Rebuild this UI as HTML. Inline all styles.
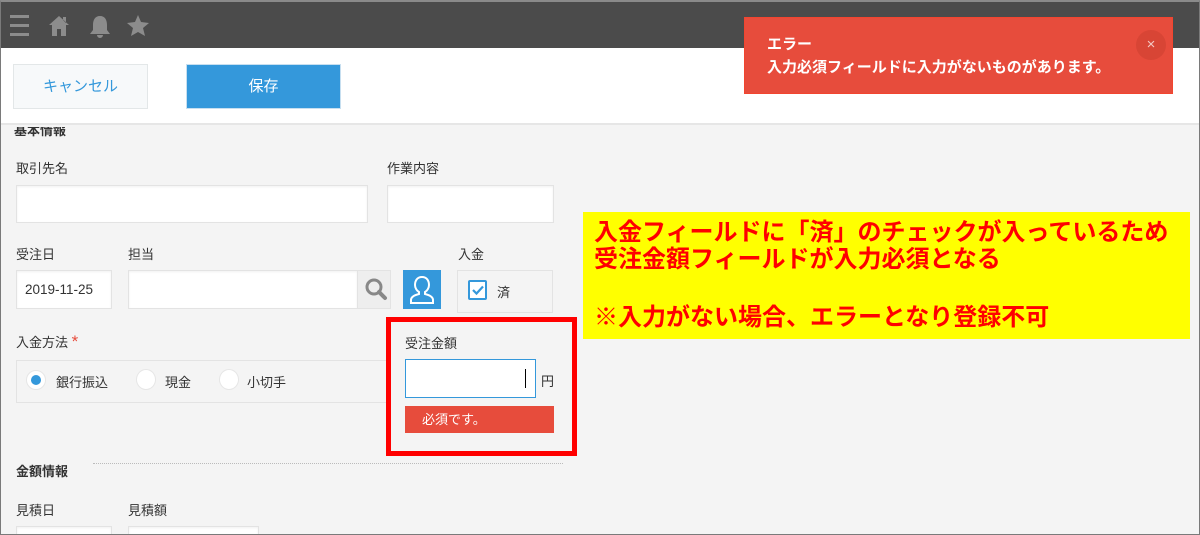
<!DOCTYPE html>
<html style="width:1200px;height:535px;overflow:hidden"><head><meta charset="utf-8"><style>
*{margin:0;padding:0;box-sizing:border-box}
body{width:1200px;height:535px;overflow:hidden;background:#f4f4f4;font-family:"Liberation Sans","Noto Sans CJK JP",sans-serif;font-size:13px;color:#333;position:relative}
.a{position:absolute}
.inp{position:absolute;background:#fff;border:1px solid #e3e3e3;box-shadow:inset 0 1px 2px rgba(0,0,0,.06)}
.lbl{position:absolute;font-size:13px;color:#333}
.y{position:absolute;left:594px;color:#ff0000;font-weight:bold;font-size:24px;line-height:26px;white-space:nowrap;letter-spacing:0px}
</style></head><body>
<div class="a" style="left:0;top:0;width:1200px;height:48px;background:#4b4b4b"></div>
<svg class="a" style="left:8px;top:12px" width="150" height="28" viewBox="0 0 150 28">
<g fill="#8c8c8c"><rect x="2" y="3" width="19" height="3"/><rect x="2" y="12" width="19" height="3"/><rect x="2" y="21" width="19" height="3"/>
<path d="M51 4 L41 13 L44 13 L44 24 L49 24 L49 17 L53 17 L53 24 L58 24 L58 13 L61 13 Z M55 5 h3 v6 l-3-3z"/>
<path d="M92 4 c-5 0 -7 4 -7 9 v5 l-3 4 h20 l-3-4 v-5 c0-5-2-9-7-9z M89 23 a3 3 0 0 0 6 0z"/>
<path d="M130 3 l3 7 8 1 -6 5 2 8 -7-4 -7 4 2-8 -6-5 8-1z"/>
</g></svg>
<div class="a" style="left:0;top:48px;width:1200px;height:77px;background:#fff;border-bottom:2px solid #e6e6e6"></div>
<div class="a" style="left:13px;top:64px;width:135px;height:45px;background:#f7f9fa;border:1px solid #e3e7e8;color:#3498db;font-size:15px;text-align:center;line-height:43px">キャンセル</div>
<div class="a" style="left:186px;top:64px;width:155px;height:45px;background:#3498db;border:1px solid #c7dff0;color:#fff;font-size:15px;text-align:center;line-height:43px">保存</div>
<div class="a" style="left:14px;top:120px;font-size:13px;font-weight:bold;clip-path:inset(7px 0 0 0)">基本情報</div>

<div class="lbl" style="left:16px;top:158px">取引先名</div>
<div class="inp" style="left:16px;top:185px;width:352px;height:38px"></div>
<div class="lbl" style="left:387px;top:158px">作業内容</div>
<div class="inp" style="left:387px;top:185px;width:167px;height:38px"></div>

<div class="lbl" style="left:16px;top:244px">受注日</div>
<div class="inp" style="left:16px;top:270px;width:96px;height:39px;font-size:13.5px;line-height:37px;padding-left:8px;color:#333">2019-11-25</div>
<div class="lbl" style="left:128px;top:244px">担当</div>
<div class="inp" style="left:128px;top:270px;width:230px;height:39px"></div>
<div class="a" style="left:357px;top:270px;width:34px;height:39px;background:#eee;border:1px solid #e3e3e3"></div>
<svg class="a" style="left:364px;top:277px" width="24" height="24"><circle cx="10" cy="10" r="7" fill="none" stroke="#888" stroke-width="3"/><path d="M15 15 L21 21" stroke="#888" stroke-width="4" stroke-linecap="round"/></svg>
<div class="a" style="left:403px;top:270px;width:38px;height:39px;background:#3498db"></div>
<svg class="a" style="left:407px;top:273px" width="30" height="33"><path d="M15 4 c-5 0-7 4-7 8 c0 3 2 6 4 7 l0 2 c-4 1-8 3-8 6 v3 h22 v-3 c0-3-4-5-8-6 v-2 c2-1 4-4 4-7 c0-4-2-8-7-8z" fill="none" stroke="#fff" stroke-width="2"/></svg>
<div class="lbl" style="left:458px;top:244px">入金</div>
<div class="a" style="left:457px;top:270px;width:96px;height:43px;border:1px solid #e3e3e3"></div>
<div class="a" style="left:468px;top:280px;width:19px;height:20px;border:2px solid #3498db;background:#fff;border-radius:2px"></div>
<svg class="a" style="left:471px;top:284px" width="14" height="12"><path d="M2 6 L5.5 9.5 L12 2.5" fill="none" stroke="#3498db" stroke-width="2.2"/></svg>
<div class="lbl" style="left:497px;top:282px">済</div>

<div class="lbl" style="left:16px;top:332px">入金方法 <span style="color:#e74c3c;font-size:17px">*</span></div>
<div class="a" style="left:16px;top:360px;width:380px;height:43px;border:1px solid #e3e3e3"></div>
<div class="a" style="left:26px;top:370px;width:20px;height:20px;border-radius:50%;background:#fff;border:1px solid #e6e6e6"></div>
<div class="a" style="left:31px;top:375px;width:10px;height:10px;border-radius:50%;background:#3498db"></div>
<div class="lbl" style="left:56px;top:372px">銀行振込</div>
<div class="a" style="left:136px;top:369px;width:20px;height:21px;border-radius:50%;background:#fff;border:1px solid #e6e6e6"></div>
<div class="lbl" style="left:165px;top:372px">現金</div>
<div class="a" style="left:219px;top:369px;width:20px;height:21px;border-radius:50%;background:#fff;border:1px solid #e6e6e6"></div>
<div class="lbl" style="left:247px;top:372px">小切手</div>

<div class="a" style="left:386px;top:317px;width:191px;height:139px;background:#f4f4f4;border:5px solid #ff0000"></div>
<div class="lbl" style="left:405px;top:333px">受注金額</div>
<div class="a" style="left:405px;top:359px;width:131px;height:39px;background:#fff;border:1px solid #3498db"></div>
<div class="a" style="left:525px;top:369px;width:1px;height:19px;background:#000"></div>
<div class="lbl" style="left:541px;top:371px">円</div>
<div class="a" style="left:405px;top:406px;width:149px;height:27px;background:#e74c3c;color:#fff;font-size:13px;line-height:27px;padding-left:17px">必須です。</div>

<div class="a" style="left:93px;top:463px;width:470px;border-top:1px dotted #bbb"></div>
<div class="a" style="left:16px;top:461px;font-size:13px;font-weight:bold">金額情報</div>
<div class="lbl" style="left:16px;top:500px">見積日</div>
<div class="lbl" style="left:128px;top:500px">見積額</div>
<div class="inp" style="left:16px;top:526px;width:96px;height:9px"></div>
<div class="inp" style="left:128px;top:526px;width:131px;height:9px"></div>

<div class="a" style="left:744px;top:17px;width:429px;height:77px;background:#e74c3c;border:1px solid #f2452f"></div>
<div class="a" style="left:767px;top:33px;color:#fff;font-size:15px;font-weight:bold;line-height:23px">エラー<br>入力必須フィールドに入力がないものがあります。</div>
<div class="a" style="left:1136px;top:30px;width:30px;height:30px;border-radius:50%;background:#d84535;color:#f3c8c3;text-align:center;line-height:29px;font-size:15px">×</div>

<div class="a" style="left:583px;top:212px;width:607px;height:127px;background:#ffff00"></div>
<div class="y" style="top:220px">入金フィールドに「済」のチェックが入っているため</div>
<div class="y" style="top:247px">受注金額フィールドが入力必須となる</div>
<div class="y" style="top:305px">※入力がない場合、エラーとなり登録不可</div>

<div class="a" style="left:0;top:0;width:1200px;height:535px;border:1px solid #7a7a7a;border-top:2px solid #8a8a8a;z-index:50;pointer-events:none"></div>
</body></html>
